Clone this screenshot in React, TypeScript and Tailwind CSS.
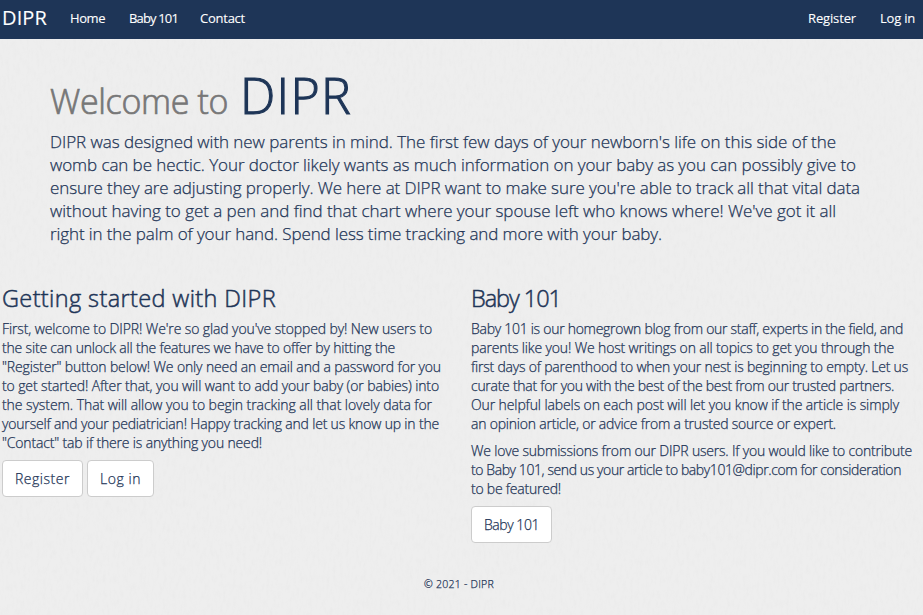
import { useLayoutEffect, useRef, useState } from "react";

type FitProps = { text: string; width: number; className?: string };

// One line of copy, tracked so that it fills the given measure.
function Fit({ text, width, className = "" }: FitProps) {
  const ref = useRef<HTMLSpanElement>(null);
  const [spacing, setSpacing] = useState(0);
  useLayoutEffect(() => {
    const el = ref.current;
    if (!el) return;
    const old = el.style.letterSpacing;
    el.style.letterSpacing = "0px";
    const natural = el.getBoundingClientRect().width;
    el.style.letterSpacing = old;
    setSpacing((width - natural) / text.length);
  }, [text, width]);
  return (
    <span className={`block whitespace-nowrap ${className}`}>
      <span ref={ref} style={{ letterSpacing: `${spacing}px` }}>{text}</span>
    </span>
  );
}

const hero: [string, number][] = [
  ["DIPR was designed with new parents in mind. The first few days of your newborn's life on this side of the", 786],
  ["womb can be hectic. Your doctor likely wants as much information on your baby as you can possibly give to", 806],
  ["ensure they are adjusting properly. We here at DIPR want to make sure you're able to track all that vital data", 810],
  ["without having to get a pen and find that chart where your spouse left who knows where! We've got it all", 786],
  ["right in the palm of your hand. Spend less time tracking and more with your baby.", 612],
];

const started: [string, number][] = [
  ["First, welcome to DIPR! We're so glad you've stopped by! New users to", 430],
  ["the site can unlock all the features we have to offer by hitting the", 393],
  ["\"Register\" button below! We only need an email and a password for you", 439],
  ["to get started! After that, you will want to add your baby (or babies) into", 437],
  ["the system. That will allow you to begin tracking all that lovely data for", 430],
  ["yourself and your pediatrician! Happy tracking and let us know up in the", 437],
  ["\"Contact\" tab if there is anything you need!", 260],
];

const blog: [string, number][] = [
  ["Baby 101 is our homegrown blog from our staff, experts in the field, and", 432],
  ["parents like you! We host writings on all topics to get you through the", 423],
  ["first days of parenthood to when your nest is beginning to empty. Let us", 437],
  ["curate that for you with the best of the best from our trusted partners.", 423],
  ["Our helpful labels on each post will let you know if the article is simply", 428],
  ["an opinion article, or advice from a trusted source or expert.", 365],
];

const submit: [string, number][] = [
  ["We love submissions from our DIPR users. If you would like to contribute", 441],
  ["to Baby 101, send us your article to baby101@dipr.com for consideration", 430],
  ["to be featured!", 90],
];

function Lines({ rows, className }: { rows: [string, number][]; className: string }) {
  return (
    <p className={className}>
      {rows.map(([t, w]) => <Fit key={t} text={t} width={w} />)}
    </p>
  );
}

function Button({ label, width }: { label: string; width: number }) {
  return (
    <button className="h-[37px] rounded-[4px] border border-[#cccccc] bg-white px-3 text-[14px] leading-[35px]">
      <Fit text={label} width={width} />
    </button>
  );
}

export default function App() {
  return (
    <div className="relative isolate h-[615px] w-[923px] overflow-hidden bg-[#eeeeee] font-['Open_Sans','Noto_Sans',sans-serif] font-light text-[#1e3557] [-webkit-text-stroke:0.25px]">
      <svg className="absolute inset-0 -z-10 h-full w-full" aria-hidden="true">
        <filter id="paper">
          <feTurbulence type="fractalNoise" baseFrequency="0.3 0.12" numOctaves="3" seed="4" />
          <feColorMatrix values="0 0 0 0 0.72  0 0 0 0 0.72  0 0 0 0 0.72  1.2 0 0 0 -0.52" />
        </filter>
        <rect width="100%" height="100%" filter="url(#paper)" opacity="0.3" />
      </svg>

      <nav className="flex h-[39px] items-center bg-[#1e3557] pb-[4px] text-[13px] font-normal leading-[20px] text-white [-webkit-text-stroke:0.1px]">
        <Fit text="DIPR" width={45} className="ml-[2px] w-[68px] text-[20px]" />
        <Fit text="Home" width={35} className="w-[59px]" />
        <Fit text="Baby 101" width={49} className="w-[71px]" />
        <Fit text="Contact" width={45} />
        <Fit text="Register" width={48} className="ml-auto w-[72px]" />
        <Fit text="Log in" width={35} className="w-[43px]" />
      </nav>

      <header className="pl-[50px] pt-[22px]">
        <h1 className="flex h-[69px] items-baseline leading-[68px] [-webkit-text-stroke:0.7px]">
          <Fit text="Welcome to" width={178} className="w-[190px] text-[34px] text-[#777777]" />
          <Fit text="DIPR" width={112} className="text-[50px] [-webkit-text-stroke:1.1px]" />
        </h1>
        <Lines rows={hero} className="text-[17px] leading-[23px]" />
      </header>

      <main className="mt-[38px] grid grid-cols-[469px_1fr] pl-[2px]">
        <section>
          <h2 className="mb-[6px] text-[23.5px] leading-[30px] [-webkit-text-stroke:0.5px]">
            <Fit text="Getting started with DIPR" width={274} />
          </h2>
          <Lines rows={started} className="text-[14px] leading-[19px]" />
          <div className="mt-[8px] flex gap-1">
            <Button label="Register" width={55} />
            <Button label="Log in" width={41} />
          </div>
        </section>
        <section>
          <h2 className="mb-[6px] text-[23.5px] leading-[30px] [-webkit-text-stroke:0.5px]">
            <Fit text="Baby 101" width={90} />
          </h2>
          <Lines rows={blog} className="text-[14px] leading-[19px]" />
          <Lines rows={submit} className="mt-[8px] text-[14px] leading-[19px]" />
          <div className="mt-[8px] flex">
            <Button label="Baby 101" width={55} />
          </div>
        </section>
      </main>

      <footer className="mt-[33px] pl-[424px] text-[10.5px] leading-[16px]">
        <Fit text="© 2021 - DIPR" width={70} />
      </footer>
    </div>
  );
}
